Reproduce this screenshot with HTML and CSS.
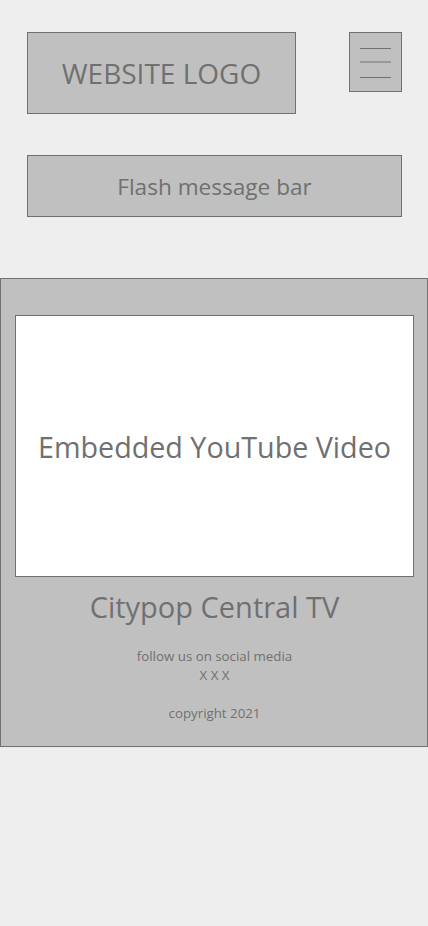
FILE: index.html
```html
<!DOCTYPE html>
<html>
<head>
<meta charset="utf-8">
<link rel="stylesheet" href="styles.css">
</head>
<body>
<header class="top">
  <div class="logo">WEBSITE LOGO</div>
  <div class="menu">
    <span class="bar"></span>
    <span class="bar bar-mid"></span>
    <span class="bar bar-last"></span>
  </div>
</header>
<div class="flash">Flash message bar</div>
<main class="main">
  <div class="video">Embedded YouTube Video</div>
  <h1 class="title">Citypop Central TV</h1>
  <p class="follow">follow us on social media</p>
  <p class="social">X X X</p>
  <p class="copy">copyright 2021</p>
</main>
</body>
</html>
```
FILE: styles.css
```css
* { box-sizing: border-box; }
html, body { margin: 0; padding: 0; }
body {
  background: #eeeeee;
  font-family: "Open Sans", "Noto Sans", sans-serif;
  color: #707070;
  width: 428px;
  height: 926px;
}
.top {
  display: flex;
  justify-content: space-between;
  align-items: flex-start;
  padding: 32px 26px 0 27px;
}
.logo {
  width: 269px;
  height: 82px;
  background: #c0c0c0;
  border: 1px solid #707070;
  display: flex;
  align-items: center;
  justify-content: center;
  font-size: 28px;
}
.menu {
  width: 53px;
  height: 60px;
  background: #c0c0c0;
  border: 1px solid #707070;
  display: flex;
  flex-direction: column;
  align-items: center;
  padding-top: 15px;
}
.bar {
  display: block;
  width: 31px;
  height: 1px;
  background: #707070;
}
.bar-mid {
  height: 2px;
  margin-top: 12px;
  background: #989898;
}
.bar-last {
  margin-top: 14px;
}
.flash {
  margin: 41px 26px 0 27px;
  height: 62px;
  background: #c0c0c0;
  border: 1px solid #707070;
  display: flex;
  align-items: center;
  justify-content: center;
  font-size: 22.6px;
  padding-top: 1px;
}
.main {
  margin-top: 61px;
  height: 469px;
  background: #c0c0c0;
  border: 1px solid #707070;
  padding: 36px 13px 0 14px;
  display: flex;
  flex-direction: column;
  align-items: center;
}
.video {
  width: 399px;
  height: 262px;
  background: #ffffff;
  border: 1px solid #707070;
  display: flex;
  align-items: center;
  justify-content: center;
  font-size: 28.7px;
}
.title {
  margin: 10px 0 0;
  font-size: 29px;
  font-weight: normal;
  line-height: 40px;
}
.follow {
  margin: 20px 0 0;
  font-size: 13.3px;
  line-height: 19px;
}
.social {
  margin: 0;
  font-size: 13.3px;
  line-height: 19px;
}
.copy {
  margin: 19px 0 0;
  font-size: 13.3px;
  line-height: 19px;
}
```
